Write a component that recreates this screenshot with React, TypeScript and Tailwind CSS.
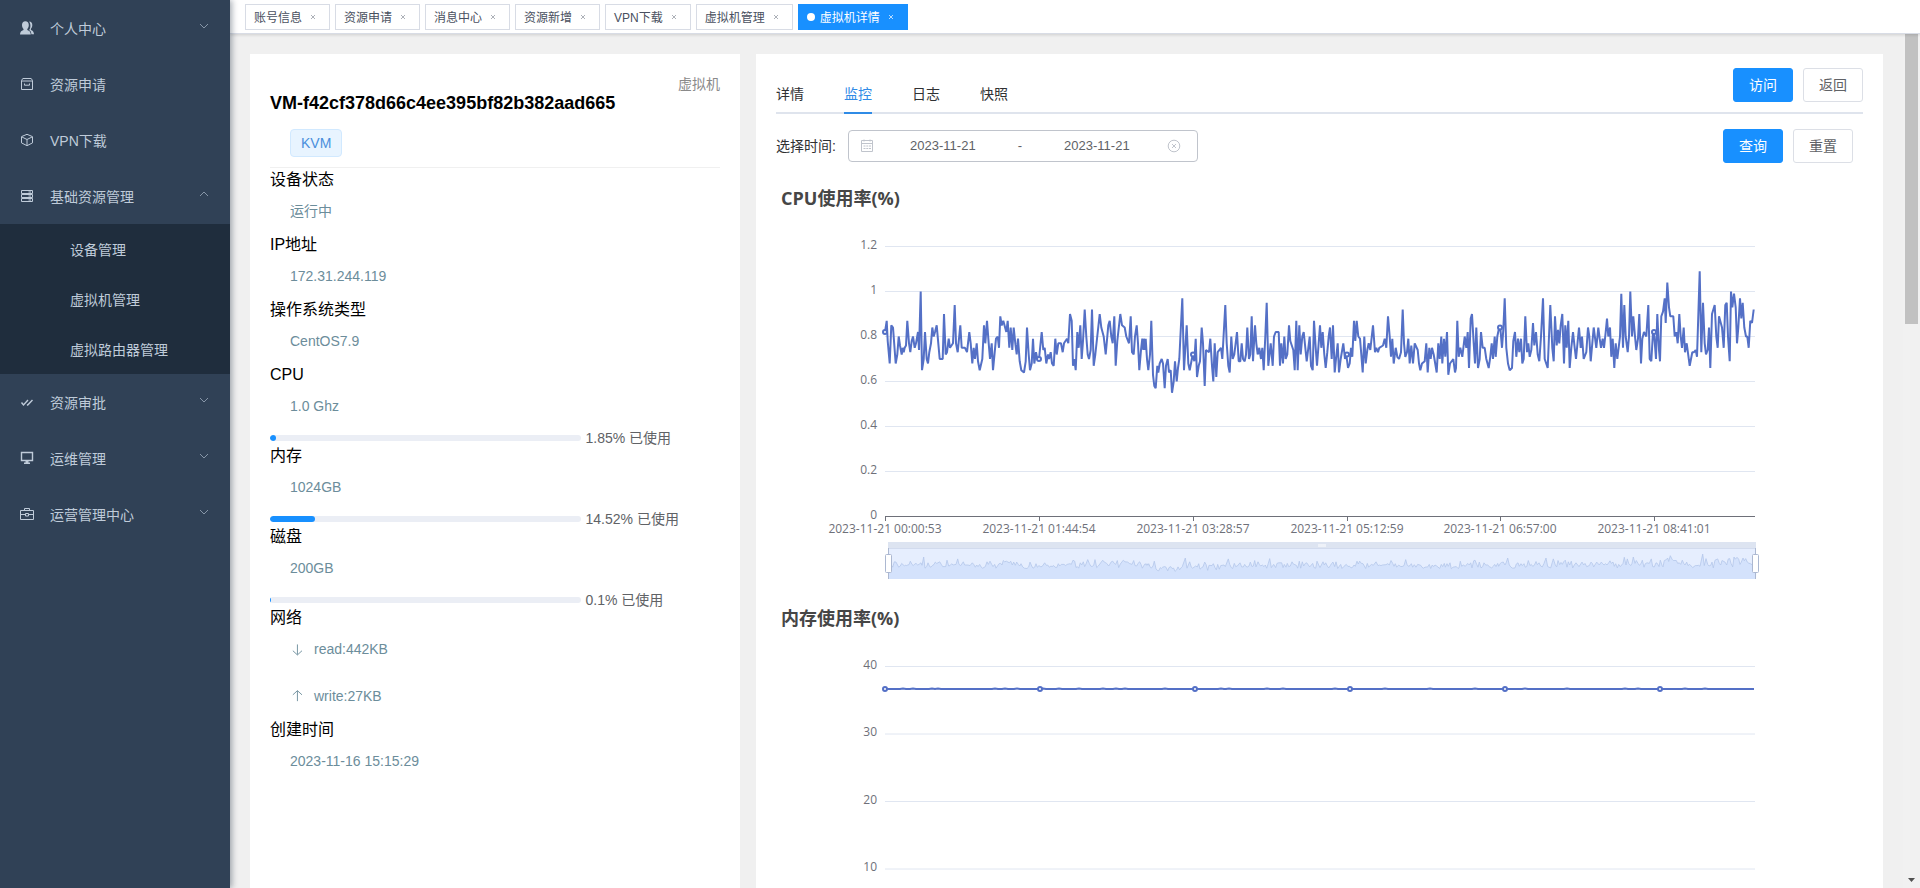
import React from 'react';
import clsx from 'clsx';

type MenuItem = {
  label: string;
  icon: React.ReactNode;
  arrow?: 'up' | 'down';
  children?: string[];
};

const Icon: React.FC<{ children: React.ReactNode; className?: string }> = ({ children, className = 'w-[14px] h-[14px]' }) => (
  <svg viewBox="0 0 14 14" className={className} fill="none" stroke="currentColor" strokeWidth="1" aria-hidden="true">
    {children}
  </svg>
);

const menu: MenuItem[] = [
  {
    label: '个人中心',
    arrow: 'down',
    icon: (
      <Icon>
        <path d="M9.2 0.6c2 0 3.1 1.5 3.1 3.5 0 1.7-.6 2.9-1.4 3.7v1.1c1.9.7 3 1.8 3.1 4.4h-2.6c-.1-2.4-.9-3.5-2.3-4.3.8-1 1.3-2.4 1.3-4.2 0-1.7-.5-3-1.2-4.2z" fill="currentColor" stroke="none" />
        <path d="M5.4 0.3c2.1 0 3.4 1.5 3.4 3.7 0 1.8-.6 3.1-1.5 3.9v1c2.2.7 3.4 1.9 3.5 4.7H0c.1-2.8 1.2-4 3.5-4.7v-1C2.6 7.1 2 5.8 2 4 2 1.8 3.3.3 5.4.3z" fill="currentColor" stroke="none" />
      </Icon>
    ),
  },
  {
    label: '资源申请',
    icon: (
      <Icon>
        <path d="M2.8 1.5h8.4l1.3 2v9h-11v-9z M1.5 4h11 M4.5 6.500v1.700h5V6.500" />
      </Icon>
    ),
  },
  {
    label: 'VPN下载',
    icon: (
      <Icon>
        <path d="M7 1.3l5.5 2.3v6.300L7 12.700 1.500 9.900V3.600z M2 4l5 2.500L12 4 M7 6.500v6" />
      </Icon>
    ),
  },
  {
    label: '基础资源管理',
    arrow: 'up',
    children: ['设备管理', '虚拟机管理', '虚拟路由器管理'],
    icon: (
      <Icon>
        <path d="M1.5 1.5h11v3h-11z M1.5 5.5h11v3h-11z M1.5 9.5h11v3h-11z M8.5 3h2.5 M8.5 7h2.5 M8.5 11h2.5" />
      </Icon>
    ),
  },
  {
    label: '资源审批',
    arrow: 'down',
    icon: (
      <Icon>
        <path d="M1.500 7.500l2 2.500 4.500-5 M7 9.500l.7.500L12.500 5" strokeWidth="1.400" />
      </Icon>
    ),
  },
  {
    label: '运维管理',
    arrow: 'down',
    icon: (
      <Icon>
        <path d="M1.5 1.5h11v8h-11z" strokeWidth="1.4" />
        <path d="M5.5 10h3v1.5h1.5V13H4v-1.5h1.5z" fill="currentColor" stroke="none" />
      </Icon>
    ),
  },
  {
    label: '运营管理中心',
    arrow: 'down',
    icon: (
      <Icon>
        <path d="M.5 3.5h13v9H.5z M4.5 3.5v-2h5v2 M.5 7.5h5 M8.5 7.5h5 M5.5 6.5h3v2.5h-3z" />
      </Icon>
    ),
  },
];

const tags = ['账号信息', '资源申请', '消息中心', '资源新增', 'VPN下载', '虚拟机管理', '虚拟机详情'];

const detailTabs = ['详情', '监控', '日志', '快照'];

const Chevron: React.FC<{ up: boolean }> = ({ up }) => (
  <svg viewBox="0 0 10 6" className="w-[10px] h-[6px] mb-1" fill="none" stroke="#8796a8" strokeWidth="1" aria-hidden="true">
    <path d={up ? 'M1 5l4-4 4 4' : 'M1 1l4 4 4-4'} />
  </svg>
);

const Sidebar: React.FC = () => (
  <nav className="w-[230px] shrink-0 bg-[#304156] text-[#bfcbd9] text-sm shadow-[2px_0_6px_rgba(0,21,41,0.35)] relative z-20">
    {menu.map(item => (
      <div key={item.label}>
        <a href="#" className="flex items-center h-14 pl-5 pr-[21px]">
          {item.icon}
          <span className="ml-4 pt-0.5 flex-1">{item.label}</span>
          {item.arrow && <Chevron up={item.arrow === 'up'} />}
        </a>
        {item.children && (
          <div className="bg-[#1f2d3d]">
            {item.children.map(child => (
              <a key={child} href="#" className="flex items-center h-[50px] pt-0.5 pl-[70px]">
                {child}
              </a>
            ))}
          </div>
        )}
      </div>
    ))}
  </nav>
);

const TagsBar: React.FC = () => (
  <div className="flex gap-[5px] h-[34px] shrink-0 pl-[15px] pt-1 bg-white border-b border-[#d8dce5] shadow-[0_1px_3px_rgba(0,0,0,0.14)] relative z-10">
    {tags.map((tag, idx) => {
      const active = idx === tags.length - 1;
      return (
        <div
          key={tag}
          className={clsx(
            'flex items-center h-[26px] px-2 border text-xs whitespace-nowrap',
            active ? 'bg-[#1890ff] border-[#1890ff] text-white' : 'bg-white border-[#d8dce5] text-[#495060]'
          )}
        >
          {active && <span className="w-2 h-2 mr-[5px] rounded-full bg-white"></span>}
          <a href="#" className="pt-0.5">{tag}</a>
          <button className="w-4 h-4 ml-[3px] flex items-center justify-center" aria-label={`关闭 ${tag}`}>
            <svg viewBox="0 0 6 6" className="w-[6px] h-[6px]" stroke={active ? '#fff' : '#8a8f99'} strokeWidth="0.7">
              <path d="M1 1l4 4M5 1L1 5" />
            </svg>
          </button>
        </div>
      );
    })}
  </div>
);

const Label: React.FC<{ children: React.ReactNode }> = ({ children }) => (
  <dt className="text-base leading-[18px] text-black">{children}</dt>
);

const Value: React.FC<{ children: React.ReactNode; last?: boolean }> = ({ children, last = true }) => (
  <dd className={clsx('flex items-center gap-2 h-11 pl-5 text-sm text-[#6c8d9b]', last && 'mb-[3px]')}>{children}</dd>
);

const Usage: React.FC<{ percent: number }> = ({ percent }) => (
  <dd className="flex items-center h-[19px] text-sm text-[#606266] whitespace-nowrap">
    <div
      className="w-[69%] h-[6px] rounded-full bg-[#ebeef5] overflow-hidden"
      role="progressbar"
      aria-label="使用率"
      aria-valuenow={percent}
      aria-valuemin={0}
      aria-valuemax={100}
    >
      <div className="h-full rounded-full bg-[#1890ff]" style={{ width: `${percent}%` }}></div>
    </div>
    <span className="ml-[5px]">{percent}% 已使用</span>
  </dd>
);

const VmInfo: React.FC = () => (
  <aside className="w-[490px] shrink-0 bg-white p-5">
    <div className="text-sm leading-5 text-right text-[#8a8a8a]">虚拟机</div>
    <h1 className="text-lg leading-[18px] font-bold text-black">VM-f42cf378d66c4ee395bf82b382aad665</h1>
    <div className="mt-[17px] pb-[10px] pl-5 border-b border-[#f0f0f0]">
      <span className="inline-flex items-center h-7 px-[10px] rounded border border-[#d1e9ff] bg-[#e8f4ff] text-sm text-[#4a8fdc] align-top">
        KVM
      </span>
    </div>
    <dl className="pt-[3px]">
      <Label>设备状态</Label>
      <Value>运行中</Value>
      <Label>IP地址</Label>
      <Value>172.31.244.119</Value>
      <Label>操作系统类型</Label>
      <Value>CentOS7.9</Value>
      <Label>CPU</Label>
      <Value last={false}>1.0 Ghz</Value>
      <Usage percent={1.85} />
      <Label>内存</Label>
      <Value last={false}>1024GB</Value>
      <Usage percent={14.52} />
      <Label>磁盘</Label>
      <Value last={false}>200GB</Value>
      <Usage percent={0.1} />
      <Label>网络</Label>
      <Value>
        <Icon className="w-4 h-4">
          <path d="M6.500 3v9M2.500 8.500L6.500 12.200 10.500 8.500" strokeWidth="0.800" />
        </Icon>
        read:442KB
      </Value>
      <Value>
        <Icon className="w-4 h-4">
          <path d="M6.500 11.500v-9M2.500 6L6.500 2.300 10.500 6" strokeWidth="0.800" />
        </Icon>
        write:27KB
      </Value>
      <Label>创建时间</Label>
      <Value>2023-11-16 15:15:29</Value>
    </dl>
  </aside>
);

// Samples are "x:usage", x in thirds of a chart unit and usage in hundredths of a percent
const cpuMorning =
  '76:82 81:87 84:78 90:68 95:85 100:84 108:68 113:72 117:80 121:76 126:72 129:75 132:73 135:75 139:76 143:87 148:77 152:73 156:78 160:80 165:75 169:77 175:82 178:74 183:100 187:65 192:70 196:82 201:70 205:68 209:73 214:77 218:84 222:80 226:82 231:85 236:77 240:70 249:70 253:90 258:72 262:73 267:79 271:75 280:77 285:94 289:77 294:73 302:85 306:75 316:75 322:73 329:82 333:77 338:68 342:75 346:70 351:77 355:69 360:65 368:70 373:85 377:77 382:87 387:77 391:70 396:77 400:65 405:73 409:79 414:80 418:75 422:89 426:85 431:87 440:82 444:87 449:75 453:84 458:74 462:84 467:77 471:72 475:79 480:69 485:65 493:64 498:69 502:84 507:72 511:65 516:68 520:79 524:68 529:73 533:70 538:70 546:82 551:74 555:75 560:68 565:72 568:70 573:73 577:68 582:67 587:79 591:72 596:77 604:77 609:73 613:77 622:79 626:77 631:90 636:87 640:67 644:70 648:65 653:82 657:75 662:85 666:70 670:78 675:92 680:80 684:72 688:70 693:74 697:92 702:67 707:72 720:90 725:84 732:80 738:72 746:85 750:87 755:80 759:77 764:89 768:67 773:78 782:90 787:85 795:84 800:80 808:77 813:89 817:73 822:72 826:80 831:85 835:77 839:65 844:74 848:79 851:74 853:79 856:74 858:79 862:70 866:65 871:72 875:87 880:63 884:58 888:57 893:67 896:64 900:68 906:70 910:68 915:57 919:67 924:70 928:64 933:65 937:55 942:60 946:69 951:60 955:66 959:70 968:97 973:65 981:85 986:68 990:65 999:72 1004:69 1008:79 1012:62 1017:67 1021:69 1026:84 1030:77 1035:58 1039:74 1048:73 1052:79 1057:67 1061:60 1065:77 1070:62 1074:73 1084:75 1088:70 1097:94 1101:77 1106:67 1110:64 1115:80 1119:70 1124:72 1132:82 1137:69 1142:69 1146:77 1150:70 1155:69 1159:72 1163:84 1168:70 1172:72 1176:89 1180:69 1186:85 1190:77 1194:72 1199:75 1204:70 1208:75 1212:65 1217:80 1221:95 1226:67 1233:77 1239:67 1243:80 1248:82 1257:82 1261:67 1265:77 1270:68 1274:80 1278:70 1283:72 1288:85 1292:78 1301:74 1305:65 1310:87 1314:65 1319:85 1323:72 1328:80 1332:82 1341:69 1350:80 1354:67 1359:65 1363:87 1368:75';
const cpuForenoon =
  '52:67 61:85 65:75 69:82 74:72 78:66 83:73 87:80 91:84 96:70 100:85 105:64 109:70 114:77 118:64 123:70 131:77 136:70 140:72 145:66 150:68 154:75 158:71 163:87 167:78 171:87 176:80 181:79 185:72 189:64 194:80 198:68 203:74 207:77 212:74 220:85 226:73 230:75 235:73 239:75 250:76 255:79 260:75 265:89 270:80 274:71 278:79 282:68 288:75 293:71 298:70 304:73 309:92 313:77 317:71 322:73 326:79 330:68 335:76 340:68 345:77 354:74 358:68 362:65 367:68 375:69 380:77 384:64 389:75 393:70 397:75 402:72 411:64 416:77 420:70 425:80 428:68 433:79 437:71 442:82 446:63 451:68 461:70 466:64 469:66 473:87 477:71 482:75 488:71 495:80 500:75 504:82 508:66 513:88 517:90 522:77 526:68 530:84 535:66 540:70 544:82 549:75 555:75 560:70 567:66 572:71 576:77 580:70 585:80 588:71 593:80 597:83 602:84 607:75 611:83 615:97 620:75 625:68 630:65 637:66 641:78 646:82 650:71 655:79 659:73 664:79 668:68 672:70 677:89 682:73 686:77 690:71 695:74 700:86 704:76 709:82 714:72 719:69 724:80 730:97 735:70 744:66 752:94 758:75 762:69 766:89 771:76 775:83 779:77 783:85 788:90 793:68 797:85 801:75 806:87 810:66 815:75 820:82 825:75 829:70 838:84 843:75 847:80 852:70 860:73 865:84 869:80 873:69 882:84 890:75 896:84 900:79 904:75 909:79 913:75 918:82 922:88 926:80 931:84 935:71 939:79 944:66 948:77 953:70 961:80 965:99 970:75 974:94 978:80 984:73 988:80 992:100 997:80 1001:89 1006:80 1010:74 1015:79 1019:90 1024:68 1028:79 1033:82 1040:80 1046:94 1050:70 1055:69 1060:82 1064:80 1069:70 1073:90 1078:74 1081:69 1085:89 1090:91 1095:97 1098:86 1103:104 1108:93 1112:89 1121:89 1125:80 1130:82 1134:77 1139:90 1143:80 1147:75 1152:84 1156:73 1161:77 1170:67 1178:73 1183:73 1188:74 1192:71 1200:109 1205:73 1210:95 1215:77 1219:72 1224:74 1228:84 1232:66 1237:90 1245:94 1250:80 1254:75 1258:89 1267:84 1272:75 1277:94 1281:95 1285:80 1290:69 1294:100 1298:93 1303:99 1308:93 1312:77 1316:84 1321:97 1325:88 1329:95 1334:84 1339:80 1343:80 1347:75 1352:87 1357:86 1362:92';

const parseSeries = (raw: string, offset: number): [number, number][] =>
  raw.split(' ').map(pair => {
    const [x, v] = pair.split(':').map(Number);
    return [(x + offset) / 3, v / 100];
  });

const cpuSeries = [...parseSeries(cpuMorning, -76), ...parseSeries(cpuForenoon, 1244)];

// Small bumps on the otherwise flat memory line, as x positions
const memoryBumps = [18, 28, 47, 53, 110, 120, 132, 158, 174, 194, 218, 231, 240, 280, 336, 344, 382, 398, 450, 500, 545, 590, 640, 682, 740, 753, 800, 820];

const PLOT_LEFT = 109;
const PLOT_RIGHT = 979;
const PLOT_TOP = 28.5;
const PLOT_BOTTOM = 298.5;

const toY = (value: number, max: number) => PLOT_BOTTOM - (value / max) * (PLOT_BOTTOM - PLOT_TOP);

const toPoints = (points: [number, number][]) => points.map(([x, y]) => `${x.toFixed(1)},${y.toFixed(1)}`).join(' ');

const Grid: React.FC<{ ticks: number[]; max: number }> = ({ ticks, max }) => (
  <g>
    {ticks.map(tick => (
      <g key={tick}>
        <line x1={PLOT_LEFT} x2={PLOT_RIGHT} y1={toY(tick, max)} y2={toY(tick, max)} stroke={tick === 0 ? '#6e7079' : '#e0e6f1'} />
        <text x={101} y={toY(tick, max) + 2} textAnchor="end" fontSize="12" fill="#6e7079">
          {tick}
        </text>
      </g>
    ))}
  </g>
);

const Markers: React.FC<{ points: [number, number][] }> = ({ points }) => (
  <g fill="#fff" stroke="#5470c6" strokeWidth="2">
    {points.map(([x, y]) => (
      <circle key={x} cx={x} cy={y} r="2" />
    ))}
  </g>
);

const Chart: React.FC<{ title: string; children: React.ReactNode }> = ({ title, children }) => (
  <section className="font-['Open_Sans','Noto_Sans_CJK_SC',sans-serif]">
    <h2 className="pl-[5px] text-lg leading-10 font-bold text-[#464646]">{title}</h2>
    <svg viewBox="0 0 1087 380" className="block w-full" role="img" aria-label={title}>
      {children}
    </svg>
  </section>
);

const CpuChart: React.FC = () => {
  const ticks = [109, 263, 417, 571, 724, 878];
  const times = ['00:00:53', '01:44:54', '03:28:57', '05:12:59', '06:57:00', '08:41:01'];
  const usage = [0.82, 0.7, 0.72, 0.72, 0.84, 0.82];
  const line = cpuSeries.map(([x, v]): [number, number] => [PLOT_LEFT + x, toY(v, 1.2)]);
  const shadow = cpuSeries.map(([x, v]): [number, number] => [112 + x, 347 + (0.75 - v) * 32]);

  return (
    <Chart title="CPU使用率(%)">
      <Grid ticks={[1.2, 1, 0.8, 0.6, 0.4, 0.2, 0]} max={1.2} />
      {ticks.map((x, idx) => (
        <g key={x}>
          <line x1={x + 0.5} x2={x + 0.5} y1={298} y2={303} stroke="#6e7079" />
          <text x={x} y={315} textAnchor="middle" fontSize="12" fill="#6e7079">
            {`2023-11-21 ${times[idx]}`}
          </text>
        </g>
      ))}
      <polyline points={toPoints(line)} fill="none" stroke="#5470c6" strokeWidth="2" strokeLinejoin="bevel" />
      <Markers points={ticks.map((x, idx) => [x, toY(usage[idx], 1.2)])} />

      {/* Zoom slider */}
      <rect x="112" y="324" width="868" height="37" fill="#e6eefe" />
      <polygon points={`112,361 ${toPoints(shadow)} 980,361`} fill="#d4e2fc" />
      <polyline points={toPoints(shadow)} fill="none" stroke="#b4c6ea" strokeWidth="0.8" />
      <rect x="112" y="324" width="868" height="6" fill="#dde4f1" />
      <path d="M112 330.5H980" stroke="#d2dbee" />
      <path d="M543 326v3M545 326v3M547 326v3M549 326v3" stroke="#fff" />
      <path d="M112.5 330v31M979.5 330v31" stroke="#acb8d1" />
      <rect x="109.5" y="336.5" width="6" height="18" rx="1" fill="#fff" stroke="#acb8d1" />
      <rect x="976.5" y="336.5" width="6" height="18" rx="1" fill="#fff" stroke="#acb8d1" />
    </Chart>
  );
};

const MemoryChart: React.FC = () => {
  const base = 51;
  const line = memoryBumps.flatMap((x): [number, number][] => [
    [PLOT_LEFT + x - 3, base],
    [PLOT_LEFT + x, base - 0.6],
    [PLOT_LEFT + x + 3, base],
  ]);

  return (
    <Chart title="内存使用率(%)">
      <Grid ticks={[40, 30, 20, 10, 0]} max={40} />
      <polyline points={`${PLOT_LEFT},${base} ${toPoints(line)} 978,${base}`} fill="none" stroke="#5470c6" strokeWidth="2" />
      <Markers points={[109, 264, 419, 574, 729, 884].map(x => [x, base])} />
    </Chart>
  );
};

const Button: React.FC<{ primary?: boolean; children: React.ReactNode }> = ({ primary, children }) => (
  <button
    type="button"
    className={clsx(
      'w-[60px] h-[34px] rounded-[3px] border text-sm',
      primary ? 'bg-[#1890ff] border-[#1890ff] text-white' : 'bg-white border-[#dcdfe6] text-[#606266]'
    )}
  >
    {children}
  </button>
);

const Monitor: React.FC = () => (
  <main className="flex-1 min-w-0 bg-white px-5 pt-[14px]">
    <div className="flex justify-between border-b-2 border-[#dfe4ed] h-[46px]">
      <div className="flex items-end gap-10 text-sm text-[#303133]" role="tablist">
        {detailTabs.map(tab => (
          <button
            key={tab}
            role="tab"
            aria-selected={tab === '监控'}
            className={clsx('h-10 pt-0.5 -mb-[2px] border-b-2', tab === '监控' ? 'text-[#2f8be6] border-[#2f8be6]' : 'border-transparent')}
          >
            {tab}
          </button>
        ))}
      </div>
      <div className="flex gap-[10px]">
        <Button primary>访问</Button>
        <Button>返回</Button>
      </div>
    </div>

    <form className="flex items-center mt-[15px] mb-[15px] pr-[10px] text-sm text-[#303133]" onSubmit={e => e.preventDefault()}>
      <label htmlFor="start">选择时间:</label>
      <div className="flex items-center w-[350px] h-8 ml-3 px-[9px] rounded border border-[#c0c4cc] text-[13px] text-[#606266]">
        <svg viewBox="0 0 14 14" className="w-[14px] h-[14px] mx-[2px]" fill="none" stroke="#c0c4cc" aria-hidden="true">
          <path d="M1.5 1.5h11v11h-11z M1.5 4.5h11 M4 .5v2 M10 .5v2 M3.5 7h2 M6.3 7h2 M9 7h2 M3.5 9.5h2 M6.3 9.5h2 M9 9.5h2" />
        </svg>
        <input id="start" className="flex-1 min-w-0 text-center outline-none" defaultValue="2023-11-21" />
        <span className="w-5 text-center">-</span>
        <input aria-label="结束日期" className="flex-1 min-w-0 text-center outline-none" defaultValue="2023-11-21" />
        <button type="button" aria-label="清除" className="ml-[3px] mr-[7px]">
          <svg viewBox="0 0 14 14" className="w-[14px] h-[14px]" fill="none" stroke="#c0c4cc">
            <circle cx="7" cy="7" r="5.8" />
            <path d="M5 5l4 4M9 5L5 9" />
          </svg>
        </button>
      </div>
      <div className="flex gap-[10px] ml-auto">
        <Button primary>查询</Button>
        <Button>重置</Button>
      </div>
    </form>

    <CpuChart />
    <MemoryChart />
  </main>
);

const ScrollBar: React.FC = () => (
  <div className="flex flex-col justify-between w-[17px] shrink-0 px-[2px] bg-[#f1f1f1]">
    <div className="h-[34%] bg-[#c1c1c1]"></div>
    <svg viewBox="0 0 13 17" className="w-[13px] h-[17px]" aria-hidden="true">
      <path d="M3 7h7l-3.5 4z" fill="#505050" />
    </svg>
  </div>
);

const App: React.FC = () => (
  <div className="flex h-screen overflow-hidden bg-[#f0f0f0] font-['Liberation_Sans','Noto_Sans_CJK_SC',sans-serif]">
    <Sidebar />
    <div className="flex-1 min-w-0 flex flex-col">
      <TagsBar />
      <div className="flex-1 min-h-0 flex">
        <div className="flex-1 min-w-0 overflow-hidden">
          <div className="flex gap-4 p-5">
            <VmInfo />
            <Monitor />
          </div>
        </div>
        <ScrollBar />
      </div>
    </div>
  </div>
);

export default App;
